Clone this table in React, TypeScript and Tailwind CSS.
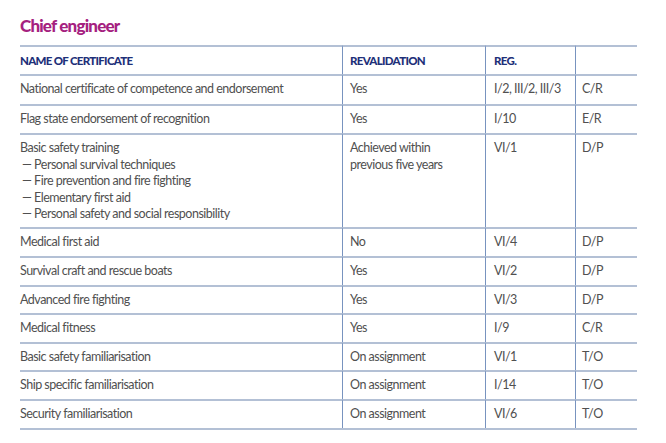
type Row = {
  name: string[];
  revalidation: string[];
  reg: string;
  code: string;
  h: string;
};

const rows: Row[] = [
  { name: ['National certificate of competence and endorsement'], revalidation: ['Yes'], reg: 'I/2, III/2, III/3', code: 'C/R', h: 'h-[30px]' },
  { name: ['Flag state endorsement of recognition'], revalidation: ['Yes'], reg: 'I/10', code: 'E/R', h: 'h-[29px]' },
  {
    name: [
      'Basic safety training',
      '— Personal survival techniques',
      '— Fire prevention and fire fighting',
      '— Elementary first aid',
      '— Personal safety and social responsibility',
    ],
    revalidation: ['Achieved within', 'previous five years'],
    reg: 'VI/1',
    code: 'D/P',
    h: 'h-[94px]',
  },
  { name: ['Medical first aid'], revalidation: ['No'], reg: 'VI/4', code: 'D/P', h: 'h-[29px]' },
  { name: ['Survival craft and rescue boats'], revalidation: ['Yes'], reg: 'VI/2', code: 'D/P', h: 'h-[29px]' },
  { name: ['Advanced fire fighting'], revalidation: ['Yes'], reg: 'VI/3', code: 'D/P', h: 'h-[28px]' },
  { name: ['Medical fitness'], revalidation: ['Yes'], reg: 'I/9', code: 'C/R', h: 'h-[29px]' },
  { name: ['Basic safety familiarisation'], revalidation: ['On assignment'], reg: 'VI/1', code: 'T/O', h: 'h-[28px]' },
  { name: ['Ship specific familiarisation'], revalidation: ['On assignment'], reg: 'I/14', code: 'T/O', h: 'h-[29px]' },
  { name: ['Security familiarisation'], revalidation: ['On assignment'], reg: 'VI/6', code: 'T/O', h: 'h-[29px]' },
];

const cell = 'border-t-2 border-[#b3c0d5] pt-[5px] leading-[16.5px]';
const vcell = 'border-l border-l-[#7893bf]';
const head = 'pt-[6px] font-black text-[11.5px] tracking-[-0.7px] text-[#1e3079]';

export default function App() {
  return (
    <div className="w-[666px] h-[443px] bg-white pl-[20px] pt-[14px] font-['Lato',sans-serif]">
      {/* Title */}
      <h2 className="text-[17px] font-black leading-[24px] tracking-[-0.8px] text-[#a5217f] h-[31px]">
        Chief engineer
      </h2>

      {/* Table */}
      <div className="w-[617px] text-[12.5px] tracking-[-0.5px] text-[#505050]">
        {/* Header */}
        <div className="grid grid-cols-[322px_143px_90px_62px] h-[29px]">
          <div className={`${cell} ${head}`}>NAME OF CERTIFICATE</div>
          <div className={`${cell} ${vcell} ${head} pl-[7px]`}>REVALIDATION</div>
          <div className={`${cell} ${vcell} ${head} pl-[8px]`}>REG.</div>
          <div className={`${cell} ${vcell}`} />
        </div>

        {rows.map((r) => (
          <div key={r.name[0]} className={`grid grid-cols-[322px_143px_90px_62px] ${r.h}`}>
            <div className={cell}>
              {r.name.map((n) => (
                <div key={n} className={n.startsWith('—') ? 'pl-[2px]' : ''}>{n}</div>
              ))}
            </div>
            <div className={`${cell} ${vcell} pl-[7px]`}>
              {r.revalidation.map((t) => (
                <div key={t}>{t}</div>
              ))}
            </div>
            <div className={`${cell} ${vcell} pl-[8px]`}>{r.reg}</div>
            <div className={`${cell} ${vcell} pl-[6px]`}>{r.code}</div>
          </div>
        ))}
        <div className="border-t-2 border-[#b3c0d5]" />
      </div>
    </div>
  );
}
